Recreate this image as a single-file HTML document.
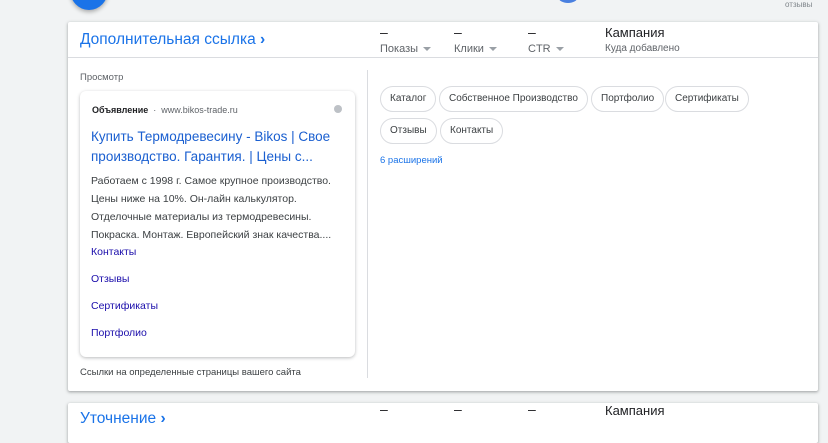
<!DOCTYPE html>
<html><head><meta charset="utf-8"><style>
*{margin:0;padding:0;box-sizing:border-box}
body{width:828px;height:419px;background:#f1f3f4;font-family:"Liberation Sans",Arial,sans-serif;position:relative;overflow:hidden;color:#3c4043}
.abs{position:absolute}
.card{position:absolute;left:68px;width:750px;background:#fff;box-shadow:0 1px 2px rgba(60,64,67,.3),0 1px 3px 1px rgba(60,64,67,.15);border-radius:2px}
.dash{font-size:14px;color:#202124}
.lbl{font-size:11px;color:#5f6368}
.tri{display:inline-block;width:0;height:0;border-left:4px solid transparent;border-right:4px solid transparent;border-top:4px solid #9aa0a6;margin-left:5px;vertical-align:middle}
.chip{position:absolute;height:26px;border:1px solid #dadce0;border-radius:13px;font-size:10px;line-height:24px;padding:0 9px;color:#3c4043;white-space:nowrap}
.sl{position:absolute;left:91px;font-size:10.5px;color:#1a0dab}
</style></head><body>
<div class="abs" style="left:70px;top:-30px;width:38px;height:40px;border-radius:50%;background:#1a73e8;box-shadow:0 2px 4px rgba(0,0,0,.3)"></div>
<div class="abs" style="left:558px;top:-10px;width:20px;height:13px;border-radius:50%;background:#4a80e0"></div>
<div class="abs" style="left:785px;top:0px;font-size:8px;color:#80868b">отзывы</div>

<div class="card" style="top:22px;height:369px">
  <div class="abs" style="left:12px;top:9px;font-size:15.5px;color:#1a73e8">Дополнительная ссылка <span style="font-weight:bold">›</span></div>
  <div class="abs dash" style="left:312px;top:2px">–</div>
  <div class="abs dash" style="left:386px;top:2px">–</div>
  <div class="abs dash" style="left:460px;top:2px">–</div>
  <div class="abs lbl" style="left:312px;top:21px">Показы<span class="tri"></span></div>
  <div class="abs lbl" style="left:386px;top:21px">Клики<span class="tri"></span></div>
  <div class="abs lbl" style="left:460px;top:21px">CTR<span class="tri"></span></div>
  <div class="abs" style="left:537px;top:3px;font-size:13px;color:#202124">Кампания</div>
  <div class="abs lbl" style="left:537px;top:21px;font-size:10px">Куда добавлено</div>
  <div class="abs" style="left:0;top:35px;width:750px;height:1px;background:#dadce0"></div>
  <div class="abs" style="left:12px;top:50px;font-size:9.5px;color:#5f6368">Просмотр</div>
  <div class="abs" style="left:299px;top:48px;width:1px;height:308px;background:#dadce0"></div>
  <div class="abs" style="left:12px;top:345px;font-size:9.5px;color:#3c4043">Ссылки на определенные страницы вашего сайта</div>
</div>

<div class="abs" style="left:80px;top:91px;width:275px;height:266px;background:#fff;border-radius:6px;box-shadow:0 1px 3px rgba(60,64,67,.35)"></div>
<div class="abs" style="left:92px;top:105px;font-size:9px;color:#202124"><b>Объявление</b> <span style="color:#5f6368">&nbsp;·&nbsp; www.bikos-trade.ru</span></div>
<div class="abs" style="left:334px;top:105px;width:8px;height:8px;border-radius:50%;background:#bdc1c6"></div>
<div class="abs" style="left:91px;top:127px;width:260px;font-size:13.5px;line-height:20px;color:#1a5fd0">Купить Термодревесину - Bikos | Свое производство. Гарантия. | Цены с...</div>
<div class="abs" style="left:91px;top:172px;width:260px;font-size:10.5px;line-height:18px;color:#3c4043">Работаем с 1998 г. Самое крупное производство. Цены ниже на 10%. Он-лайн калькулятор. Отделочные материалы из термодревесины. Покраска. Монтаж. Европейский знак качества....</div>
<div class="sl" style="top:246px">Контакты</div>
<div class="sl" style="top:273px">Отзывы</div>
<div class="sl" style="top:300px">Сертификаты</div>
<div class="sl" style="top:327px">Портфолио</div>

<div class="chip" style="left:380px;top:86px">Каталог</div>
<div class="chip" style="left:439px;top:86px">Собственное Производство</div>
<div class="chip" style="left:591px;top:86px">Портфолио</div>
<div class="chip" style="left:665px;top:86px">Сертификаты</div>
<div class="chip" style="left:380px;top:118px">Отзывы</div>
<div class="chip" style="left:440px;top:118px">Контакты</div>
<div class="abs" style="left:380px;top:155px;font-size:9.5px;color:#1a73e8">6 расширений</div>

<div class="card" style="top:403px;height:40px">
  <div class="abs" style="left:12px;top:7px;font-size:15.5px;color:#1a73e8">Уточнение <span style="font-weight:bold">›</span></div>
  <div class="abs dash" style="left:312px;top:-2px">–</div>
  <div class="abs dash" style="left:386px;top:-2px">–</div>
  <div class="abs dash" style="left:460px;top:-2px">–</div>
  <div class="abs" style="left:537px;top:0px;font-size:13px;color:#202124">Кампания</div>
</div>
</body></html>
